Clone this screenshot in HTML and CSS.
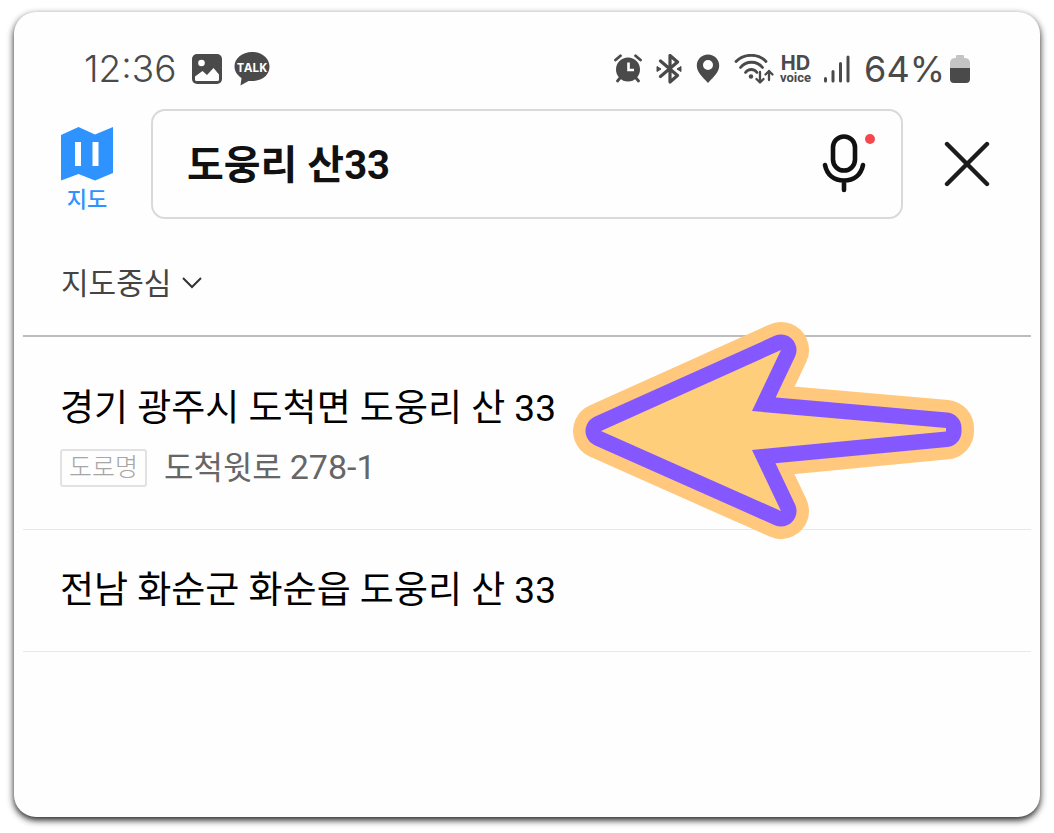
FILE: index.html
```html
<!DOCTYPE html>
<html lang="ko">
<head>
<meta charset="utf-8">
<meta name="viewport" content="width=device-width, initial-scale=1">
<title>지도 검색</title>
<link rel="stylesheet" href="styles.css">
</head>
<body>
<main class="phone">
  <div class="status">
    <div class="status-group">
      <span class="clock">12:36</span>
      <svg class="status-photo" width="30" height="30" viewBox="0 0 30 30" aria-hidden="true">
        <rect width="30" height="30" rx="5" fill="#4a4a4a"/>
        <circle cx="9.500" cy="9" r="3.300" fill="#fff"/>
        <path d="M3 22.500L10.500 17L15 21L21.500 14L27 20.500V25.500Q27 27 25.500 27H4.500Q3 27 3 25.500Z" fill="#fff"/>
      </svg>
      <svg class="status-talk" width="36" height="34" viewBox="0 0 36 34" aria-hidden="true">
        <path d="M18 0C8 0 .5 6.500 .5 14.500C.5 19.500 3.500 23.500 7.500 26L6.500 33.500L14.500 29C29 30 35.500 22.500 35.500 14.500C35.500 6.500 28 0 18 0Z" fill="#4a4a4a"/>
        <text x="18" y="20" text-anchor="middle" class="talk-text">TALK</text>
      </svg>
    </div>
    <div class="status-group status-right">
      <svg width="28" height="30" viewBox="0 0 28 30" aria-hidden="true">
        <circle cx="14" cy="15.500" r="12" fill="#4a4a4a"/>
        <path d="M1.500 6L6.500 1.800M26.500 6L21.500 1.800M6 24L3.500 27M22 24L24.500 27" stroke="#4a4a4a" stroke-width="2.800" stroke-linecap="round"/>
        <path d="M14.500 8.500V16H20" fill="none" stroke="#fff" stroke-width="2.600"/>
      </svg>
      <svg width="26" height="30" viewBox="0 0 26 30" aria-hidden="true">
        <path d="M4.500 7L21.500 21.500L14 28V1.500L21.500 8L4.500 22.500" fill="none" stroke="#4a4a4a" stroke-width="3.200" stroke-linejoin="round" stroke-linecap="round"/>
        <path d="M1 12.500L5 15L1 17.500ZM25 12.500L21 15L25 17.500Z" fill="#4a4a4a" stroke="#4a4a4a" stroke-linejoin="round"/>
      </svg>
      <svg width="24" height="30" viewBox="0 0 24 30" aria-hidden="true">
        <path fill-rule="evenodd" d="M12 .5C5.500 .5 .8 5.500 .8 11.500C.8 17.500 5 21.500 12 29C19 21.500 23.200 17.500 23.200 11.500C23.200 5.500 18.500 .5 12 .5ZM12 6A5 5 0 1 1 12 16A5 5 0 0 1 12 6Z" fill="#4a4a4a"/>
      </svg>
      <svg width="40" height="30" viewBox="0 0 40 30" aria-hidden="true">
        <path d="M2 7.500C10 -.8 25 -.8 32 7.500M6.500 13.500C12 6.500 23 6.500 28.500 13.500M11.500 18.500C14.500 14.500 20 14.500 23 18.500" fill="none" stroke="#4a4a4a" stroke-width="2.800" stroke-linecap="round"/>
        <circle cx="17" cy="22.500" r="2.200" fill="#4a4a4a"/>
        <path d="M26 18V28M22.500 25L26 28.500L29.500 25M35 26V17M31.500 20.500L35 17L38.500 20.500" fill="none" stroke="#4a4a4a" stroke-width="2.300" stroke-linecap="round" stroke-linejoin="round"/>
      </svg>
      <span class="hd"><b>HD</b><small>voice</small></span>
      <svg width="27" height="28" viewBox="0 0 27 28" aria-hidden="true">
        <path d="M2.500 23.500V26M10 16.500V26M17.500 8.500V26M25 2V26" stroke="#4a4a4a" stroke-width="3" stroke-linecap="round"/>
      </svg>
      <span class="battery">64%</span>
      <svg width="20" height="30" viewBox="0 0 20 30" aria-hidden="true">
        <path d="M6 4V2Q6 1 7 1H13Q14 1 14 2V4H16Q20 5 20 9V14H0V9Q0 5 4 4Z" fill="#c4c4c4"/>
        <path d="M0 14H20V25Q20 29 16 29H4Q0 29 0 25Z" fill="#4a4a4a"/>
      </svg>
    </div>
  </div>

  <form class="search" role="search">
    <a class="brand" href="#">
      <svg width="52" height="54" viewBox="0 0 52 54" aria-hidden="true">
        <path d="M0 8L17.500 0L34 7.500L52 0V46L34 53.500L17.500 47L0 53.500Z" fill="#2f93ff"/>
        <path d="M14 15H20V39H14ZM31.500 15H37.500V39H31.500Z" fill="#fff"/>
      </svg>
      <span>지도</span>
    </a>
    <div class="field">
      <input class="query" type="text" value="도웅리 산33" aria-label="장소, 주소 검색">
      <button class="mic" type="button" aria-label="음성 검색">
        <svg width="54" height="60" viewBox="0 0 54 60" aria-hidden="true">
          <g fill="none" stroke="#111" stroke-width="4.600" stroke-linecap="round">
            <rect x="11" y="2.500" width="22" height="34" rx="11"/>
            <path d="M3 31C5 41 12 46.500 22 46.500S39 41 41 31M22 47V56"/>
          </g>
          <circle cx="48" cy="5" r="5" fill="#f5484d"/>
        </svg>
      </button>
    </div>
    <button class="close" type="button" aria-label="닫기">
      <svg width="46" height="46" viewBox="0 0 46 46" aria-hidden="true">
        <path d="M3 3L43 43M43 3L3 43" stroke="#1c1c1c" stroke-width="4.400" stroke-linecap="round"/>
      </svg>
    </button>
  </form>

  <label class="filter">
    <select class="sort" aria-label="검색 기준"><option>지도중심</option></select>
    <svg width="20" height="14" viewBox="0 0 20 14" aria-hidden="true">
      <path d="M1 2L10 11L19 2" fill="none" stroke="#333" stroke-width="2"/>
    </svg>
  </label>

  <section class="results">
    <ul class="list">
      <li>
        <a class="item item-road" href="#">
          <span class="name">경기 광주시 도척면 도웅리 산 33</span>
          <span class="road"><span class="tag">도로명</span><span>도척윗로 <span class="number">278-1</span></span></span>
        </a>
      </li>
      <li>
        <a class="item" href="#"><span class="name">전남 화순군 화순읍 도웅리 산 33</span></a>
      </li>
    </ul>
    <svg class="pointer" width="404" height="220" viewBox="572 321 404 220" aria-hidden="true">
      <g stroke-linejoin="round">
        <path d="M601 431L781 350L752 411L946 428V431.500L752 450L781 511Z" fill="#ffc87c" stroke="#ffc87c" stroke-width="56"/>
        <path d="M601 431L781 350L752 411L946 428V431.500L752 450L781 511Z" fill="none" stroke="#8457ff" stroke-width="31"/>
        <path d="M601 431L781 350L752 411L946 428V431.500L752 450L781 511Z" fill="#ffce7a"/>
      </g>
    </svg>
  </section>
</main>
</body>
</html>
```
FILE: styles.css
```css
* {
  box-sizing: border-box;
}

body {
  margin: 0;
  min-height: 100vh;
  display: flex;
  padding: 12px 14px 16px;
  background: #fff;
  color: #000;
  font-family: Roboto, "Noto Sans CJK KR", sans-serif;
}

.phone {
  flex: 1;
  min-width: 0;
  padding: 37px 9px 0;
  border-radius: 22px;
  background: #fefefe;
  box-shadow: 0 3px 7px rgba(0, 0, 0, 0.9);
}

button {
  padding: 0;
  border: 0;
  background: none;
}

svg {
  display: block;
  flex: none;
}

a {
  color: inherit;
  text-decoration: none;
}

.status {
  display: flex;
  justify-content: space-between;
  height: 40px;
  padding: 0 61px;
  color: #4a4a4a;
}

.status-group {
  display: flex;
  align-items: center;
}

.clock,
.battery {
  font-family: Inter, sans-serif;
  font-size: 37px;
  font-weight: 300;
  line-height: 40px;
}

.status-photo {
  margin: 0 12px 0 16px;
}

.talk-text {
  fill: #fff;
  font-family: "Open Sans", sans-serif;
  font-size: 12px;
  font-weight: 700;
}

.status-right {
  gap: 14px;
}

.battery {
  margin-right: -9px;
  font-size: 36px;
  font-weight: 400;
}

.hd {
  display: flex;
  flex-direction: column;
  align-items: center;
  margin: 0 -2px 0 -8px;
}

.hd b {
  font-family: Inter, sans-serif;
  font-size: 20px;
  line-height: 18px;
}

.hd small {
  font-size: 13px;
  font-weight: 700;
  line-height: 12px;
}

.search {
  display: flex;
  align-items: center;
  margin-top: 20px;
  padding: 0 41px 0 38px;
}

.brand {
  display: flex;
  flex-direction: column;
  align-items: center;
  gap: 6px;
  padding-top: 11px;
  color: #2f93ff;
  font-size: 22px;
  font-weight: 500;
  line-height: 26px;
}

.field {
  display: flex;
  flex: 1;
  align-items: center;
  min-width: 0;
  height: 110px;
  margin: 0 41px 0 38px;
  padding: 0 25px 0 34px;
  border: 2px solid #d9d9d9;
  border-radius: 14px;
}

.query {
  flex: 1;
  min-width: 0;
  height: 60px;
  padding: 0 0 4px;
  border: 0;
  outline: 0;
  background: none;
  color: #111;
  font: 700 40px/56px Roboto, "Noto Sans CJK KR", sans-serif;
}

.filter {
  display: flex;
  align-items: center;
  gap: 10px;
  margin-top: 44px;
  padding-left: 38px;
}

.sort {
  appearance: none;
  height: 40px;
  padding: 0 0 4px;
  border: 0;
  background: none;
  color: #444;
  font: 30px/36px "Noto Sans CJK KR", sans-serif;
}

.results {
  position: relative;
  margin-top: 32px;
  padding-top: 11px;
  border-top: 2px solid #bdbdbd;
}

.list {
  margin: 0;
  padding: 0;
  list-style: none;
}

.item {
  display: block;
  padding: 37px 37px 36px;
  border-bottom: 1px solid #e8e8e8;
}

.item-road {
  padding-bottom: 42px;
}

.name {
  display: block;
  font-size: 37px;
  line-height: 48px;
}

.road {
  display: flex;
  align-items: center;
  gap: 17px;
  margin-top: 15px;
  color: #666;
  font-size: 32px;
  line-height: 38px;
}

.number {
  font-size: 34px;
}

.tag {
  padding: 0 7px;
  border: 2px solid #e2e2e2;
  border-radius: 3px;
  color: #a6a6a6;
  font-size: 25px;
  font-weight: 300;
  line-height: 34px;
}

.pointer {
  position: absolute;
  top: -16px;
  right: 55px;
}
```
